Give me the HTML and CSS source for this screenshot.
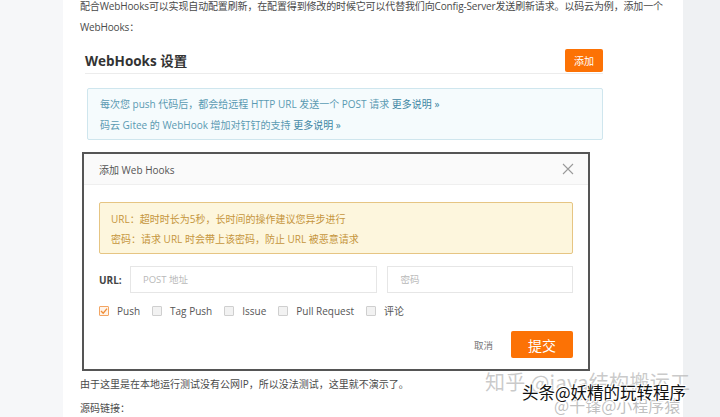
FILE: index.html
```html
<!DOCTYPE html>
<html lang="zh-CN">
<head>
    <meta charset="UTF-8">
    <title>WebHooks</title>
    <link rel="stylesheet" href="styles.css">
</head>
<body>
    <div class="page">
        <p class="text intro">配合WebHooks可以实现自动配置刷新，在配置得到修改的时候它可以代替我们向Config-Server发送刷新请求。以码云为例，添加一个<br>WebHooks：</p>

        <div class="panel">
            <div class="panel-head">
                <h2>WebHooks 设置</h2>
                <button class="btn-add">添加</button>
            </div>
            <div class="info-box">
                <div>每次您 push 代码后，都会给远程 HTTP URL 发送一个 POST 请求 <span class="more">更多说明 »</span></div>
                <div>码云 Gitee 的 WebHook 增加对钉钉的支持 <span class="more">更多说明 »</span></div>
            </div>
        </div>

        <div class="modal">
            <div class="modal-head">
                <span>添加 Web Hooks</span>
                <svg class="close" width="12" height="12" viewBox="0 0 12 12">
                    <path d="M1 1 L11 11 M11 1 L1 11" stroke="#9a9a9a" stroke-width="1.1" fill="none"/>
                </svg>
            </div>
            <div class="modal-body">
                <div class="warn-box">
                    <div>URL：超时时长为5秒，长时间的操作建议您异步进行</div>
                    <div>密码：请求 URL 时会带上该密码，防止 URL 被恶意请求</div>
                </div>
                <div class="url-row">
                    <label class="url-label">URL:</label>
                    <div class="input wide">POST 地址</div>
                    <div class="input narrow">密码</div>
                </div>
                <div class="checks">
                    <span class="check on">
                        <svg width="8" height="8" viewBox="0 0 8 8"><path d="M1 4 L3.2 6.2 L7 1.6" stroke="#f08d36" stroke-width="1.3" fill="none"/></svg>
                    </span><span class="check-label">Push</span>
                    <span class="check"></span><span class="check-label">Tag Push</span>
                    <span class="check"></span><span class="check-label">Issue</span>
                    <span class="check"></span><span class="check-label">Pull Request</span>
                    <span class="check"></span><span class="check-label">评论</span>
                </div>
                <div class="modal-foot">
                    <span class="cancel">取消</span>
                    <button class="btn-submit">提交</button>
                </div>
            </div>
        </div>

        <p class="text after">由于这里是在本地运行测试没有公网IP，所以没法测试，这里就不演示了。</p>
        <p class="text after">源码链接：</p>
    </div>

    <div class="mark mark-zhihu">知乎 @java结构搬运工</div>
    <div class="mark mark-gray">@千锋@小程序猿</div>
    <div class="mark mark-toutiao">头条@妖精的玩转程序</div>
</body>
</html>
```

FILE: styles.css
```css
body {
    margin: 0;
    background-color: #f6f7f9;
    font-family: "Open Sans", "Noto Sans CJK SC", sans-serif;
    color: #444;
    overflow: hidden;
}
.page {
    position: relative;
    margin-left: 63px;
    width: 620px;
    height: 417px;
    padding-left: 17px;
    padding-right: 4px;
    box-sizing: border-box;
    background-color: #ffffff;
    box-shadow: 37px 0 0 #eff1f3;
    overflow: hidden;
}
.text {
    margin: 0;
    font-size: 10px;
    line-height: 21px;
    color: #4a4a4a;
}
.intro {
    margin-top: -4px;
    letter-spacing: -0.15px;
    white-space: nowrap;
}
.panel {
    margin-left: 5px;
    width: 518px;
}
.panel-head {
    display: flex;
    justify-content: space-between;
    align-items: center;
    height: 27px;
    margin-top: 8px;
    border-bottom: 1px solid #ececec;
}
.panel-head h2 {
    margin: 0;
    font-size: 13.5px;
    font-weight: bold;
    color: #333;
}
.btn-add {
    width: 38px;
    height: 23px;
    margin-top: 1px;
    padding: 0;
    border: none;
    border-radius: 2px;
    background-color: #fc7205;
    color: #fff;
    font-family: inherit;
    font-size: 10px;
}
.info-box {
    margin-top: 14px;
    margin-left: 2px;
    height: 52px;
    padding: 5px 12px;
    box-sizing: border-box;
    background-color: #f5fbfd;
    border: 1px solid #cfe6ee;
    border-radius: 2px;
    font-size: 10px;
    line-height: 21px;
    color: #5a9ab2;
}
.info-box .more {
    color: #3d86a3;
}
.modal {
    margin-top: 12px;
    margin-left: 2px;
    width: 508px;
    height: 219px;
    box-sizing: border-box;
    border: 2px solid #555;
    background-color: #fff;
}
.modal-head {
    display: flex;
    justify-content: space-between;
    align-items: center;
    height: 30px;
    padding: 0 14px 0 15px;
    background-color: #fafafa;
    border-bottom: 1px solid #efefef;
    font-size: 10px;
    color: #555;
}
.modal-body {
    padding: 17px 15px 0 15px;
}
.warn-box {
    height: 52px;
    padding: 6px 11px;
    box-sizing: border-box;
    background-color: #fdf6dd;
    border: 1px solid #e6c583;
    border-radius: 2px;
    font-size: 10px;
    line-height: 20px;
    color: #c5953c;
}
.url-row {
    display: flex;
    align-items: center;
    margin-top: 12px;
    height: 27px;
}
.url-label {
    width: 31px;
    font-size: 10px;
    font-weight: bold;
    color: #444;
}
.input {
    height: 27px;
    box-sizing: border-box;
    padding-left: 12px;
    border: 1px solid #e6e6e6;
    font-size: 9.5px;
    line-height: 25px;
    color: #b9b9b9;
}
.wide {
    width: 248px;
}
.narrow {
    width: 186px;
    margin-left: 10px;
}
.checks {
    display: flex;
    align-items: center;
    margin-top: 11px;
    height: 13px;
    font-size: 10px;
    color: #555;
}
.check {
    display: flex;
    align-items: center;
    justify-content: center;
    width: 10px;
    height: 10px;
    box-sizing: border-box;
    border: 1px solid #cfcfcf;
    background-color: #f2f2f2;
    border-radius: 1px;
}
.check.on {
    border-color: #f3a563;
    background-color: #fff4ea;
}
.check-label {
    margin-left: 8px;
    margin-right: 12px;
}
.modal-foot {
    display: flex;
    justify-content: flex-end;
    align-items: center;
    margin-top: 14px;
}
.cancel {
    font-size: 9.5px;
    color: #777;
    margin-right: 18px;
}
.btn-submit {
    width: 62px;
    height: 27px;
    padding: 0;
    border: none;
    border-radius: 2px;
    background-color: #fc7205;
    color: #fff;
    font-family: inherit;
    font-size: 14px;
}
.after {
    margin-top: 3px;
}
.after:first-of-type {
    margin-top: 2px;
}
.mark {
    position: absolute;
    white-space: nowrap;
    line-height: 1;
    font-family: "Noto Sans CJK SC", sans-serif;
}
.mark-zhihu {
    left: 485px;
    top: 372px;
    font-size: 20px;
    letter-spacing: 0.3px;
    color: rgba(185, 185, 185, 0.75);
}
.mark-gray {
    left: 554px;
    top: 397px;
    font-size: 16px;
    color: rgba(165, 165, 165, 0.7);
}
.mark-toutiao {
    left: 522px;
    top: 384px;
    font-size: 16.5px;
    color: #111;
    text-shadow: 1px 1px 0 #fff, -1px -1px 0 #fff, 1px -1px 0 #fff, -1px 1px 0 #fff;
}
```
